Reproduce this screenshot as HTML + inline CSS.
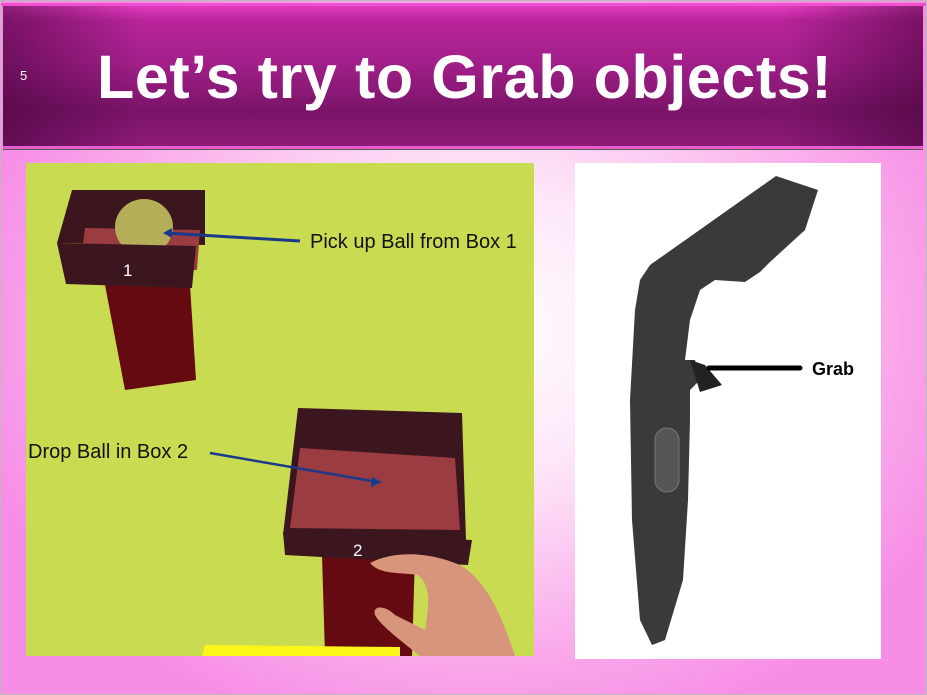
<!DOCTYPE html>
<html><head><style>
body{margin:0;width:927px;height:695px;overflow:hidden;font-family:"Liberation Sans",sans-serif;}
.bg{position:absolute;left:0;top:0;width:927px;height:695px;background:radial-gradient(ellipse 520px 420px at 480px 330px,#fff 0%,#fde6f8 35%,#f9a6ea 80%,#f78ee6 100%);}
.hdr{position:absolute;left:3px;top:6px;width:920px;height:140px;background:linear-gradient(180deg,#e23cc0 0%,#b8249a 10%,#a21f8a 40%,#7a1468 75%,#8c1a78 100%);}
.hdr:after{content:"";position:absolute;left:0;top:0;right:0;bottom:0;background:linear-gradient(90deg,rgba(60,0,50,.5) 0%,rgba(0,0,0,0) 15%,rgba(0,0,0,0) 85%,rgba(60,0,50,.5) 100%);}
.line1{position:absolute;left:3px;top:146px;width:920px;height:3px;background:#e85ccc;border-bottom:1px solid #555;}
.topl{position:absolute;left:0;top:3px;width:927px;height:3px;background:#f050d0;}
h1{position:absolute;left:97px;top:47px;margin:0;font-size:61px;line-height:1;font-weight:bold;color:#fff;letter-spacing:0.6px;white-space:nowrap;z-index:2}
.num{position:absolute;left:20px;top:68px;color:#fff;font-size:13px;z-index:2}
.edge{position:absolute;left:0;top:0;width:925px;height:693px;border:1px solid #bbb;}
</style></head><body>
<div class="bg"></div>
<div class="topl"></div>
<div class="hdr"></div>
<div class="line1"></div>
<div class="num">5</div>
<h1>Let’s try to Grab objects!</h1>
<svg width="927" height="695" style="position:absolute;left:0;top:0">
<rect x="26" y="163" width="508" height="493" fill="#c9dc51"/>
<polygon points="105,285 190,285 196,380 125,390" fill="#660a12"/>
<polygon points="72,190 205,190 205,245 57,243" fill="#3c161e"/>
<polygon points="85,228 200,230 197,270 80,268" fill="#9a3c40"/>
<ellipse cx="144" cy="227" rx="29" ry="28" fill="#b4ae58"/>
<polygon points="57,243 196,246 192,288 66,284" fill="#3c161e"/>
<text x="123" y="276" fill="#fff" font-size="17">1</text>
<polygon points="322,555 415,555 412,656 325,656" fill="#660a12"/>
<polygon points="298,408 462,413 466,540 283,535" fill="#3c161e"/>
<polygon points="300,448 455,458 460,530 290,528" fill="#9a3c40"/>
<polygon points="283,532 472,540 468,565 285,555" fill="#3c161e"/>
<text x="353" y="556" fill="#fff" font-size="17">2</text>
<polygon points="205,645 400,647 400,656 202,656" fill="#fbf51a"/>
<path d="M370 563 C395 550 430 552 460 565 C485 580 500 610 515 656 L420 656 C400 640 380 625 375 615 C372 605 385 605 395 615 L425 630 C430 600 430 585 418 575 C400 572 380 575 370 563Z" fill="#d7957c"/>
<line x1="165" y1="233" x2="300" y2="241" stroke="#1a3a8a" stroke-width="3"/>
<polygon points="163,233 172,228 172,238" fill="#1a3a8a"/>
<line x1="210" y1="453" x2="378" y2="482" stroke="#1a3a8a" stroke-width="2.5"/>
<polygon points="382,482 372,477 371,487" fill="#1a3a8a"/>
<text x="310" y="248" font-size="20" fill="#111">Pick up Ball from Box 1</text>
<text x="28" y="458" font-size="20" fill="#111">Drop Ball in Box 2</text>
<rect x="575" y="163" width="306" height="496" fill="#fff"/>
<path d="M776 176 L818 190 L805 230 L770 262 L760 272 L745 282 L715 280 L700 290 L690 320 L685 360 L695 360 L700 380 L690 390 L690 420 L688 500 L683 580 L665 640 L652 645 L640 620 L632 520 L630 400 L635 310 L640 280 L650 265 Z" fill="#3a3a3c"/>
<path d="M690 360 L705 365 L722 385 L700 392 Z" fill="#222"/>
<rect x="655" y="428" width="24" height="64" rx="12" fill="#555" stroke="#777"/>
<line x1="709" y1="368" x2="800" y2="368" stroke="#000" stroke-width="5" stroke-linecap="round"/>
<text x="812" y="375" font-size="18" font-weight="bold" fill="#000">Grab</text>
</svg>
<div class="edge"></div>
</body></html>
